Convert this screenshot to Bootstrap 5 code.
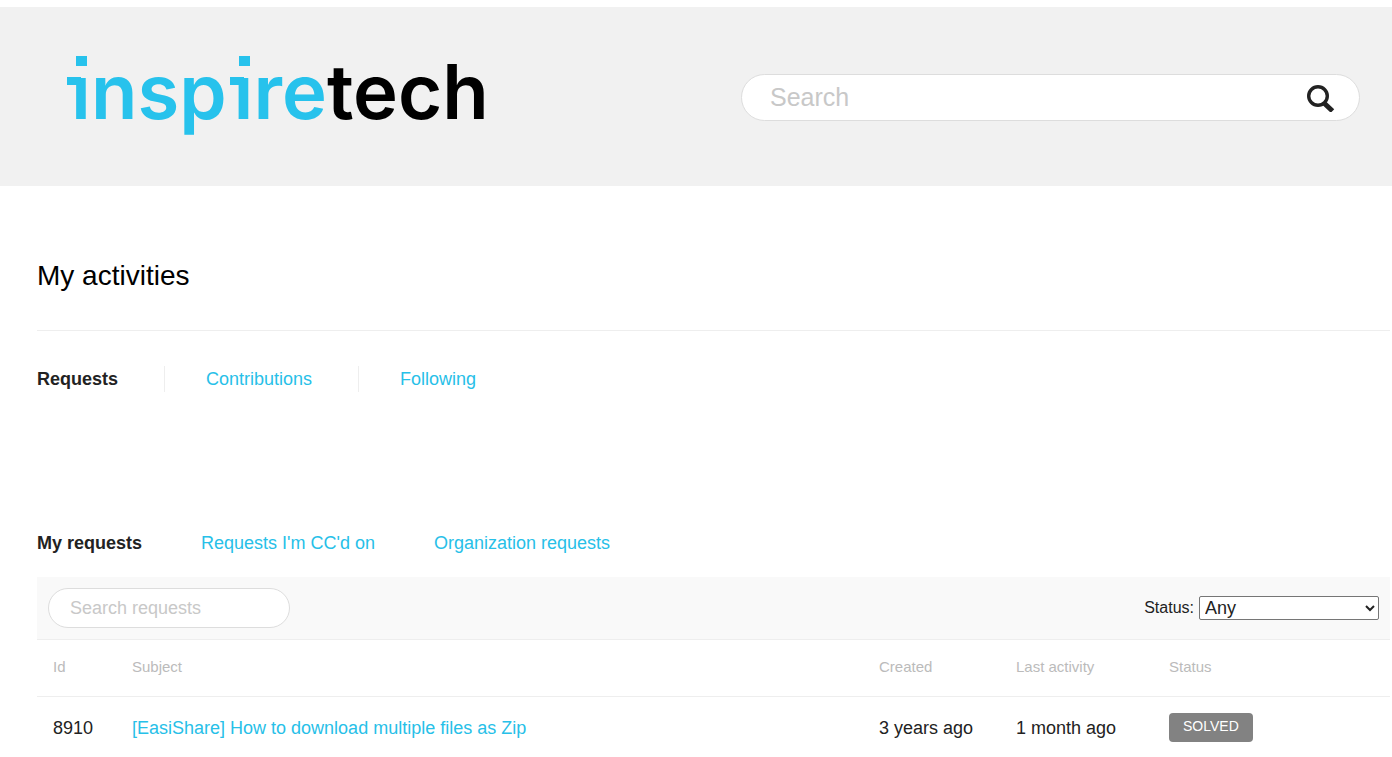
<!DOCTYPE html>
<html lang="en">
<head>
<meta charset="utf-8">
<meta name="viewport" content="width=device-width, initial-scale=1">
<title>My activities</title>
<link rel="stylesheet" href="https://cdn.jsdelivr.net/npm/bootstrap@5.3.0/dist/css/bootstrap.min.css">
<style>
  body { font: 18px/26px "Liberation Sans", Arial, sans-serif; color: #222; background: #fff; }
  a { color: #27c0e8; text-decoration: none; }
  .site-header { background: #f1f1f1; margin-top: 7px; padding: 39px 32px 38px 64px; }
  .brand { font: 600 76px/90px Inter, sans-serif; color: #000; padding-bottom: 12px; }
  .brand:hover { color: #000; }
  .brand-first { color: #27c2ec; }
  /* The wordmark's i has a square dot and a slab on its left; the gradient leaves the font's round dot unpainted */
  .slab-i { display: inline-block; position: relative; margin-left: 7px; color: transparent; background: linear-gradient(transparent 30px, #27c2ec 30px); -webkit-background-clip: text; background-clip: text; }
  .slab-i::before, .slab-i::after { content: ""; position: absolute; background: #27c2ec; }
  .slab-i::before { width: 11px; height: 10px; left: 5px; top: 10px; }
  .slab-i::after { width: 14px; height: 8px; left: -4px; top: 31px; }
  .site-search { width: calc(50% - 29px); height: 47px; background: #fff; border: 1px solid #ddd; padding: 0 24px 0 28px; }
  .site-search input { font-size: 25px; line-height: 30px; height: 45px; }
  .plain-input { border: 0; background: transparent; padding: 0; outline: 0; min-width: 0; }
  input::placeholder { color: #c8c8c8; opacity: 1; }
  .page-main { padding: 73px 2px 0 37px; }
  h1 { font-size: 28px; line-height: 34px; font-weight: 400; color: #000; padding-bottom: 37px; border-bottom: 1px solid #eee; margin-bottom: 35px; }
  .main-tabs { margin-bottom: 138px; }
  .main-tabs li { padding: 0 46px 0 41px; border-right: 1px solid #eee; }
  .main-tabs li:first-child { padding-left: 0; }
  .main-tabs li:last-child { border: 0; }
  .sub-tabs { gap: 59px; margin-bottom: 21px; }
  .toolbar { background: #f9f9f9; border-bottom: 1px solid #eee; padding: 11px; }
  .request-search { width: 242px; height: 40px; border: 1px solid #ddd; padding: 0 21px; background: #fff; outline: 0; }
  .toolbar label { font-size: 16px; margin-right: 5px; }
  .toolbar select { width: 180px; height: 24px; padding: 0 1px; border: 1px solid #767676; border-radius: 2px; background: #fff; color: #222; line-height: 22px; }
  .requests { table-layout: fixed; width: 100%; }
  .requests th { font-size: 15px; font-weight: 400; color: #bbb; height: 57px; padding: 0 0 2px 16px; border-bottom: 1px solid #eee; }
  .requests thead tr, .requests th { height: 56px; }
  .requests td { height: 63px; padding: 0 0 0 16px; color: #222; }
  .requests .status-cell { padding-left: 17px; }
  .col-id { width: 79px; }
  .col-created { width: 137px; }
  .col-last { width: 152px; }
  .col-state { width: 238px; }
  .solved { display: inline-block; vertical-align: middle; font-size: 14px; line-height: 27px; padding: 0 14px 2px; color: #fff; background: #828282; border-radius: 4px; }
</style>
</head>
<body>
<header class="site-header d-flex align-items-center justify-content-between">
  <a class="brand" href="#"><span class="brand-first"><span class="slab-i">i</span>nsp<span class="slab-i">i</span>re</span>tech</a>
  <form class="site-search d-flex align-items-center rounded-pill" role="search">
    <input class="plain-input flex-grow-1" type="search" placeholder="Search" aria-label="Search">
    <button class="plain-input d-flex" type="submit" aria-label="Submit search">
      <svg width="30" height="30" viewBox="0 0 30 30" fill="none" stroke="#222" aria-hidden="true"><circle cx="13" cy="14" r="9.300" stroke-width="3.400"/><path d="M19 21 27.500 29" stroke-width="5"/></svg>
    </button>
  </form>
</header>
<main class="page-main">
  <h1>My activities</h1>
  <nav aria-label="Activities">
    <ul class="main-tabs list-unstyled d-flex">
      <li class="fw-bold" aria-current="page">Requests</li>
      <li><a href="#">Contributions</a></li>
      <li><a href="#">Following</a></li>
    </ul>
  </nav>
  <nav aria-label="Requests">
    <ul class="sub-tabs list-unstyled d-flex">
      <li class="fw-bold" aria-current="page">My requests</li>
      <li><a href="#">Requests I'm CC'd on</a></li>
      <li><a href="#">Organization requests</a></li>
    </ul>
  </nav>
  <form class="toolbar d-flex align-items-center justify-content-between">
    <input class="request-search rounded-pill" type="search" placeholder="Search requests" aria-label="Search requests">
    <div class="d-flex align-items-center">
      <label for="status">Status:</label>
      <select id="status"><option>Any</option><option>Open</option><option>Awaiting your reply</option><option>Solved</option></select>
    </div>
  </form>
  <table class="requests">
    <thead>
      <tr><th class="col-id" scope="col">Id</th><th scope="col">Subject</th><th class="col-created" scope="col">Created</th><th class="col-last" scope="col">Last activity</th><th class="col-state status-cell" scope="col">Status</th></tr>
    </thead>
    <tbody>
      <tr><td>8910</td><td><a href="#">[EasiShare] How to download multiple files as Zip</a></td><td>3 years ago</td><td>1 month ago</td><td class="status-cell"><span class="solved">SOLVED</span></td></tr>
    </tbody>
  </table>
</main>
<script src="https://cdn.jsdelivr.net/npm/bootstrap@5.3.0/dist/js/bootstrap.bundle.min.js"></script>
</body>
</html>
